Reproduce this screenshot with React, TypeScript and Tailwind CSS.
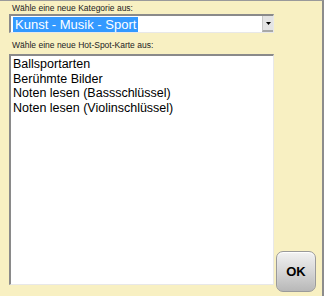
import React from "react";

const items = [
  "Ballsportarten",
  "Berühmte Bilder",
  "Noten lesen (Bassschlüssel)",
  "Noten lesen (Violinschlüssel)",
];

export default function App() {
  return (
    <div
      className="w-[324px] h-[296px] bg-[#f8f0c2] border-t border-t-[#9a9a9a] border-r-2 border-r-[#8c8c8c] flex flex-col"
      style={{ fontFamily: '"Liberation Sans", Arial, sans-serif' }}
    >
      <div className="pl-3 pt-[2px] text-[8.5px] leading-[10px] text-[#222]">
        Wähle eine neue Kategorie aus:
      </div>

      {/* Category select */}
      <div className="ml-[9px] mt-[1px] w-[265px] h-[19px] flex bg-white border-t-2 border-l-2 border-t-[#8a8a8a] border-l-[#8a8a8a] border-b border-r border-b-[#e8e8e8] border-r-[#e8e8e8]">
        <div className="flex-1 flex items-center pl-[2px]">
          <span className="bg-[#3399ff] text-white text-[13px] leading-[15px] px-[2px]">
            Kunst - Musik - Sport
          </span>
        </div>
        <div className="w-[11px] h-full bg-[#e4e4e4] border-l border-l-[#c8c8c8] border-b-2 border-b-[#a8a8a8] flex items-center justify-center">
          <svg width="5" height="3" viewBox="0 0 5 3">
            <path d="M0 0 H5 L2.5 3 Z" fill="#000" />
          </svg>
        </div>
      </div>

      <div className="pl-3 mt-[7px] text-[8.5px] leading-[10px] text-[#222]">
        Wähle eine neue Hot-Spot-Karte aus:
      </div>

      {/* Map list */}
      <div className="ml-[9px] mt-[4px] w-[265px] h-[231px] bg-white border-t-2 border-l-2 border-t-[#8a8a8a] border-l-[#8a8a8a] border-b border-r border-b-[#e8e8e8] border-r-[#e8e8e8] pl-[2px] pt-[1px]">
        {items.map((t) => (
          <div key={t} className="text-[12.5px] leading-[14.5px] text-black">
            {t}
          </div>
        ))}
      </div>

      {/* OK button */}
      <div className="flex justify-end pr-[6px] -mt-[34px]">
        <button className="w-[40px] h-[41px] rounded-[7px] border border-[#9a9a9a] bg-gradient-to-b from-[#f2f2f2] via-[#d6d6d6] to-[#b8b8b8] shadow-[inset_0_1px_1px_#fff] text-[13px] font-bold text-black flex items-center justify-center">
          OK
        </button>
      </div>
    </div>
  );
}
